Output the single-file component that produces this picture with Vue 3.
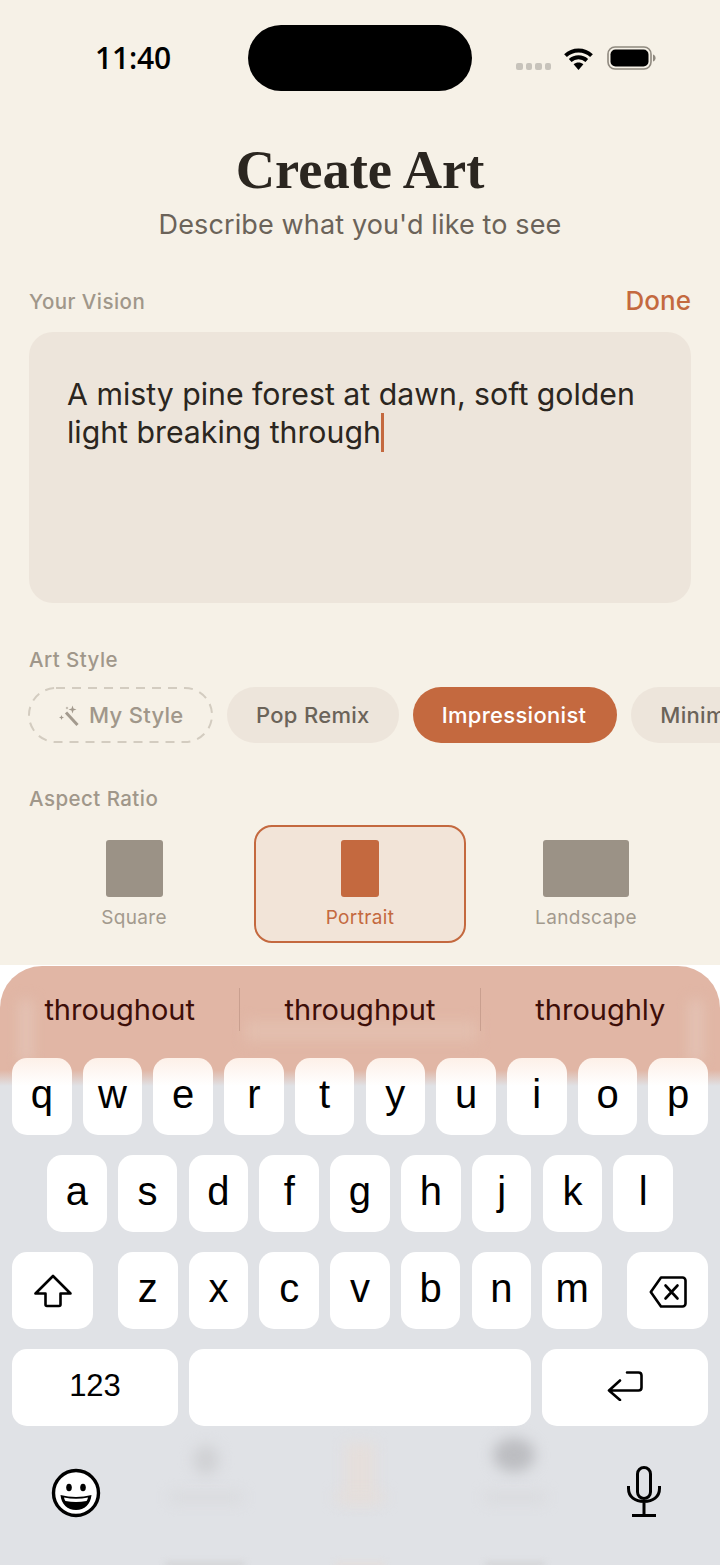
<script setup>
const row1 = ['q','w','e','r','t','y','u','i','o','p']
const row2 = ['a','s','d','f','g','h','j','k','l']
const row3 = ['z','x','c','v','b','n','m']
const pills = ['Pop Remix', 'Impressionist', 'Minimal']
const ratios = [
  { name: 'Square', w: 57, on: false },
  { name: 'Portrait', w: 38, on: true },
  { name: 'Landscape', w: 86, on: false }
]
const words = ['throughout', 'throughput', 'throughly']
</script>

<template>
  <div class="screen">
    <div class="main">
      <header class="status">
        <span class="time">11:40</span>
        <div class="island"></div>
        <div class="sys">
          <div class="dots"><i></i><i></i><i></i><i></i></div>
          <svg class="wifi" width="31" height="23" viewBox="0 0 31 23">
            <path d="M15.5 23 10.6 17.3c2.9-2.5 6.9-2.5 9.8 0z" fill="#000"/>
            <path d="M2.500 8.600c7.300-6.800 18.700-6.800 26 0M7.200 13.400c4.700-4.300 11.900-4.300 16.600 0" fill="none" stroke="#000" stroke-width="4"/>
          </svg>
          <svg class="bat" width="49" height="24" viewBox="0 0 49 24">
            <rect x="1" y="1" width="43" height="22" rx="7" fill="none" stroke="#8f897f" stroke-width="1.6"/>
            <rect x="3.5" y="3.5" width="38" height="17" rx="5" fill="#000"/>
            <path d="M46 8.5c1.8.6 2.6 2 2.6 3.5s-.8 2.9-2.6 3.5z" fill="#8f897f"/>
          </svg>
        </div>
      </header>

      <div class="head">
        <h1>Create Art</h1>
        <p>Describe what you'd like to see</p>
      </div>

      <div class="vision-label">
        <span class="label">Your Vision</span>
        <span class="done">Done</span>
      </div>
      <div class="area">A misty pine forest at dawn, soft golden light breaking through<i class="caret"></i></div>

      <div class="label style-label">Art Style</div>
      <div class="pills">
        <div class="pill mine">
          <svg class="dash" width="185" height="56" viewBox="0 0 185 56" fill="none">
            <rect x="1" y="1" width="183" height="54" rx="27" stroke="#d3ccc0" stroke-width="2" stroke-dasharray="9 7"/>
          </svg>
          <svg width="24" height="24" viewBox="0 0 24 24" fill="none">
            <path d="M9 9.5 20.5 22" stroke="#a39a8e" stroke-width="3"/>
            <path d="M15.5 2.5l1 3 3 1-3 1-1 3-1-3-3-1 3-1zM4.5 12l.7 1.8 1.8.7-1.8.7-.7 1.8-.7-1.8-1.8-.7 1.8-.7zM10 3.5l.4 1.1 1.1.4-1.1.4-.4 1.1-.4-1.1-1.1-.4 1.1-.4z" fill="#a39a8e"/>
          </svg>
          <span>My Style</span>
        </div>
        <div v-for="p in pills" :key="p" class="pill" :class="{ on: p === 'Impressionist' }">{{ p }}</div>
      </div>

      <div class="label ratio-label">Aspect Ratio</div>
      <div class="ratios">
        <div v-for="r in ratios" :key="r.name" class="ratio" :class="{ on: r.on }">
          <div class="swatch" :style="{ width: r.w + 'px' }"></div>
          <span>{{ r.name }}</span>
        </div>
      </div>
    </div>

    <section class="kb">
      <div class="ghost g-card"></div>
      <div class="ghost g-left"></div>
      <div class="ghost g-right"></div>
      <div class="ghost g-i1"></div>
      <div class="ghost g-i2"></div>
      <div class="ghost g-i3"></div>
      <div class="ghost g-l1"></div>
      <div class="ghost g-l2"></div>
      <div class="ghost g-l3"></div>
      <div class="ghost g-b1"></div>
      <div class="ghost g-b2"></div>
      <div class="ghost g-b3"></div>

      <div class="suggest">
        <template v-for="(w, i) in words" :key="w">
          <span class="word">{{ w }}</span>
          <i v-if="i < 2" class="sep"></i>
        </template>
      </div>

      <div class="rows">
        <div class="row">
          <div v-for="k in row1" :key="k" class="key top">{{ k }}</div>
        </div>
        <div class="row r2">
          <div v-for="k in row2" :key="k" class="key">{{ k }}</div>
        </div>
        <div class="row r3">
          <div class="key wide">
            <svg width="38" height="34" viewBox="0 0 38 34" fill="none" stroke="#000" stroke-width="2.6" stroke-linejoin="round">
              <path d="M19 2 1.500 19.500h10v11q0 1.500 1.500 1.500h12q1.500 0 1.500-1.500v-11h10z"/>
            </svg>
          </div>
          <div class="letters">
            <div v-for="k in row3" :key="k" class="key">{{ k }}</div>
          </div>
          <div class="key wide">
            <svg class="del" width="38" height="32" viewBox="0 0 38 32" fill="none" stroke="#000" stroke-width="2.6" stroke-linejoin="round">
              <path d="M12 1.500h21.500a3 3 0 0 1 3 3v23a3 3 0 0 1-3 3H12L1.800 16z"/>
              <path d="M16.500 9.500l12 13M28.500 9.500l-12 13" stroke-linecap="round"/>
            </svg>
          </div>
        </div>
        <div class="row r4">
          <div class="key num">123</div>
          <div class="key space"></div>
          <div class="key num">
            <svg width="36" height="30" viewBox="0 0 36 30" fill="none" stroke="#000" stroke-width="2.6" stroke-linecap="round" stroke-linejoin="round">
              <path d="M20 1.500h11.500q3 0 3 3v12q0 3-3 3H2M13 9.500 2 19.500 13 29"/>
            </svg>
          </div>
        </div>
      </div>

      <div class="tools">
        <svg width="50" height="50" viewBox="0 0 50 50">
          <circle cx="25" cy="25" r="22.5" fill="#fff" stroke="#000" stroke-width="3.4"/>
          <ellipse cx="18" cy="19.500" rx="2.800" ry="3.800"/>
          <ellipse cx="32" cy="19.500" rx="2.800" ry="3.800"/>
          <path d="M9.500 27c10 2.500 21 2.500 31 0-.8 9-7 15-15.500 15S10.300 36 9.500 27z"/>
          <path d="M13 29.500c8 1.600 16 1.600 24 0-.4 2-1 3-1.500 3.500-7 1.400-14 1.400-21 0-.5-.5-1.100-1.500-1.500-3.500z" fill="#fff"/>
        </svg>
        <svg class="mic" width="38" height="52" viewBox="0 0 38 52" fill="none" stroke="#000" stroke-width="3" stroke-linecap="butt">
          <rect x="12.500" y="1.500" width="13" height="31" rx="6.500"/>
          <path d="M3.500 20v2.500c0 8.500 6.500 13 15.500 13s15.500-4.500 15.500-13V20M19 35.500v13.500M7 49.500h24"/>
        </svg>
      </div>
    </section>
  </div>
</template>

<style scoped>
.screen {
  width: 720px;
  height: 1565px;
  display: flex;
  flex-direction: column;
  background: #f6f1e7;
  font-family: Inter, "Liberation Sans", sans-serif;
  overflow: hidden;
}
.main { flex: 1; display: flex; flex-direction: column; min-height: 0; }
.status {
  height: 116px;
  padding: 25px 64px 0 95px;
  display: flex;
  align-items: flex-start;
}
.time {
  width: 153px;
  flex: none;
  margin-top: 15px;
  font-size: 30px;
  line-height: 36px;
  font-weight: 600;
  color: #000;
  font-family: "Open Sans", Inter, sans-serif;
  letter-spacing: -.2px;
}
.island { width: 224px; flex: none; height: 65.500px; border-radius: 33px; background: #000; }
.sys { margin-left: 44px; display: flex; align-items: flex-start; height: 46px; }
.dots { display: flex; gap: 3px; margin-top: 38px; }
.dots i { width: 6.500px; height: 6.500px; border-radius: 2px; background: #c7c3bb; }
.wifi { margin: 22px 0 0 12px; flex: none; }
.bat { margin: 21px 0 0 13px; flex: none; }
.head { text-align: center; }
h1 {
  margin: 0;
  font-family: "Liberation Serif", serif;
  font-size: 54.500px;
  line-height: 58px;
  font-weight: 700;
  color: #2b2620;
}
.head p {
  margin: 8px 0 0;
  font-size: 27px;
  line-height: 36px;
  letter-spacing: .13px;
  color: #6b6359;
}
.label { font-size: 20.500px; line-height: 26px; letter-spacing: .45px; color: #a0978a; font-weight: 500; padding-left: 29px; }
.vision-label {
  display: flex;
  justify-content: space-between;
  align-items: center;
  padding-right: 29px;
  margin-top: 43px;
  height: 32px;
}
.done { font-size: 26px; line-height: 30px; margin-top: -2px; font-weight: 500; color: #c4693f; }
.area {
  margin: 14px 29px 0;
  height: 271px;
  box-sizing: border-box;
  padding: 43px 38px 0;
  border-radius: 24px;
  background: #ede5db;
  font-size: 30.250px;
  line-height: 38px;
  color: #2b2620;
}
.caret {
  display: inline-block;
  width: 3px;
  height: 39px;
  background: #c4693f;
  vertical-align: -9px;
  margin-left: 0;
}
.style-label { margin-top: 44px; }
.pills { display: flex; gap: 14px; padding-left: 28px; margin-top: 14px; white-space: nowrap; }
.pill {
  height: 56px;
  flex: none;
  box-sizing: border-box;
  padding: 0 29px;
  border-radius: 28px;
  background: #ede5db;
  color: #6b6359;
  font-size: 22px;
  letter-spacing: .3px;
  font-weight: 500;
  display: flex;
  align-items: center;
}
.pill.on { background: #c4693f; color: #fff; padding-right: 31px; }
.pill.mine {
  position: relative;
  width: 185px;
  background: transparent;
  color: #a0978a;
  padding: 0 0 0 29px;
  gap: 8px;
}
.dash { position: absolute; left: 0; top: 0; }
.ratio-label { margin-top: 43px; }
.ratios {
  display: grid;
  grid-template-columns: repeat(3, 1fr);
  gap: 14px;
  padding: 0 28px;
  margin-top: 13px;
}
.ratio {
  height: 118px;
  box-sizing: border-box;
  border: 2px solid transparent;
  border-radius: 18px;
  padding-top: 13px;
  display: flex;
  flex-direction: column;
  align-items: center;
  font-size: 19px;
  line-height: 24px;
  letter-spacing: .35px;
  color: #a39a8e;
}
.ratio span { margin-top: 9px; }
.swatch { height: 57px; border-radius: 3px; background: #9b9286; }
.ratio.on { border-color: #c4693f; background: #f2e4d8; color: #c4693f; }
.ratio.on .swatch { background: #c4693f; }

.kb {
  position: relative;
  height: 600px;
  flex: none;
  background: #fff;
  overflow: hidden;
  isolation: isolate;
}
.kb::before {
  content: "";
  position: absolute;
  inset: 1px 0 0;
  border-radius: 42px 42px 0 0;
  background: linear-gradient(#e1b6a5 0, #e1b6a5 104px, #e0e2e6 120px, #e0e2e6 100%);
  z-index: -2;
}
.ghost { position: absolute; z-index: -1; filter: blur(7px); }
.g-card { left: 245px; top: 56px; width: 232px; height: 20px; background: #e3bfaf; }
.g-left { left: 20px; top: 35px; width: 12px; height: 62px; background: #e4c5b8; }
.g-right { left: 690px; top: 35px; width: 12px; height: 62px; background: #e4c5b8; }
.g-i1 { left: 193px; top: 480px; width: 26px; height: 30px; border-radius: 50%; background: #d0d1d4; }
.g-i2 { left: 345px; top: 478px; width: 30px; height: 60px; background: #e5dedb; }
.g-i3 { left: 493px; top: 473px; width: 42px; height: 34px; border-radius: 50%; background: #bcbdc1; }
.g-l1 { left: 170px; top: 528px; width: 72px; height: 9px; background: #d8d9dc; }
.g-l2 { left: 335px; top: 528px; width: 50px; height: 9px; background: #e5dedb; }
.g-l3 { left: 485px; top: 528px; width: 60px; height: 9px; background: #d8d9dc; }
.g-b1, .g-b2, .g-b3 { filter: blur(3px); top: 597px; height: 5px; }
.g-b1 { left: 165px; width: 80px; background: #d2d3d5; }
.g-b2 { left: 335px; width: 50px; background: #e5dedb; }
.g-b3 { left: 485px; width: 60px; background: #d2d3d5; }

.suggest {
  height: 93px;
  display: flex;
  align-items: flex-start;
  padding-top: 23px;
  box-sizing: border-box;
}
.word {
  flex: 1;
  text-align: center;
  font-size: 29px;
  line-height: 44px;
  color: #3d0e08;
}
.sep { width: 1px; height: 43px; background: #c99f8f; flex: none; }
.rows { display: flex; flex-direction: column; gap: 20px; padding: 0 12px; }
.row { display: flex; gap: 11.200px; height: 77px; }
.row.r2 { padding: 0 35px; }
.r3 { justify-content: space-between; }
.letters { display: flex; gap: 11.200px; width: 484px; }
.key {
  flex: 1;
  min-width: 0;
  border-radius: 15px;
  background: #fff;
  display: flex;
  align-items: center;
  justify-content: center;
  color: #000;
  font-family: "Liberation Sans", Arial, sans-serif;
  font-size: 40px;
  padding-bottom: 4px;
  box-sizing: border-box;
}
.key.top { background: linear-gradient(#fdf0e8 0, #fff 28px); }
.key.wide { flex: 0 0 81px; padding-bottom: 0; }
.del { margin-top: 2px; }
.r4 .num { flex: 0 0 166px; font-size: 31px; padding-bottom: 3px; }
.r4 .space { flex: 1; }
.tools {
  display: flex;
  justify-content: space-between;
  align-items: flex-start;
  padding: 42px 57px 0 51px;
}
.mic { margin-top: -2px; }
</style>
